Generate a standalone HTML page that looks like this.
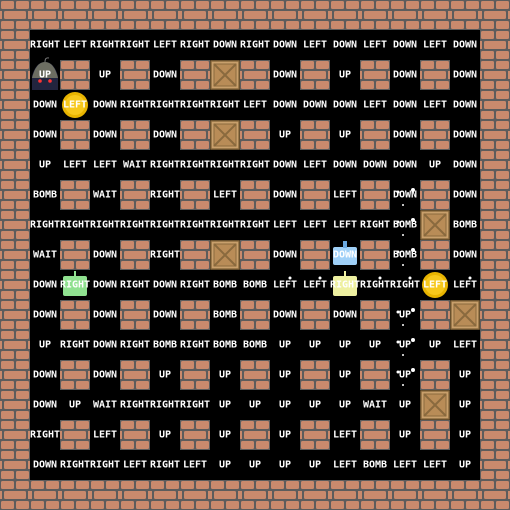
<!DOCTYPE html>
<html><head><meta charset="utf-8"><style>
html,body{margin:0;padding:0;background:#000;}
svg{display:block}
text{font-family:"DejaVu Sans Mono","Liberation Mono",monospace;font-size:10px;font-weight:bold;fill:#fff;text-anchor:middle;dominant-baseline:central}
</style></head><body>
<svg width="510" height="510" viewBox="0 0 510 510" xmlns="http://www.w3.org/2000/svg">
<defs>
<pattern id="b" x="0" y="0" width="30" height="30" patternUnits="userSpaceOnUse">
<rect width="30" height="30" fill="#5c5c5c"/>
<g fill="#c98a6d">
<rect x="1" y="1" width="13" height="8" rx="1.5"/><rect x="16" y="1" width="13" height="8" rx="1.5"/>
<rect x="4" y="11" width="22" height="8" rx="1.5"/><rect x="0" y="11" width="2" height="8"/><rect x="28" y="11" width="2" height="8"/>
<rect x="1" y="21" width="13" height="8" rx="1.5"/><rect x="16" y="21" width="13" height="8" rx="1.5"/>
</g>
</pattern>
<g id="crate">
<rect x="1" y="1" width="28" height="28" fill="#c9a06c" stroke="#8a6a3e" stroke-width="1.5"/>
<rect x="4" y="4" width="22" height="22" fill="#b98c57" stroke="#8a6a3e" stroke-width="1"/>
<path d="M4 4L26 26M26 4L4 26" stroke="#8a6a3e" stroke-width="2"/>
</g>
</defs>
<rect width="510" height="510" fill="url(#b)"/>
<rect x="30" y="30" width="450" height="450" fill="#000"/>
<g fill="url(#b)">
<rect x="60" y="60" width="30" height="30"/><rect x="120" y="60" width="30" height="30"/><rect x="180" y="60" width="30" height="30"/><rect x="240" y="60" width="30" height="30"/><rect x="300" y="60" width="30" height="30"/><rect x="360" y="60" width="30" height="30"/><rect x="420" y="60" width="30" height="30"/>
<rect x="60" y="120" width="30" height="30"/><rect x="120" y="120" width="30" height="30"/><rect x="180" y="120" width="30" height="30"/><rect x="240" y="120" width="30" height="30"/><rect x="300" y="120" width="30" height="30"/><rect x="360" y="120" width="30" height="30"/><rect x="420" y="120" width="30" height="30"/>
<rect x="60" y="180" width="30" height="30"/><rect x="120" y="180" width="30" height="30"/><rect x="180" y="180" width="30" height="30"/><rect x="240" y="180" width="30" height="30"/><rect x="300" y="180" width="30" height="30"/><rect x="360" y="180" width="30" height="30"/><rect x="420" y="180" width="30" height="30"/>
<rect x="60" y="240" width="30" height="30"/><rect x="120" y="240" width="30" height="30"/><rect x="180" y="240" width="30" height="30"/><rect x="240" y="240" width="30" height="30"/><rect x="300" y="240" width="30" height="30"/><rect x="360" y="240" width="30" height="30"/><rect x="420" y="240" width="30" height="30"/>
<rect x="60" y="300" width="30" height="30"/><rect x="120" y="300" width="30" height="30"/><rect x="180" y="300" width="30" height="30"/><rect x="240" y="300" width="30" height="30"/><rect x="300" y="300" width="30" height="30"/><rect x="360" y="300" width="30" height="30"/><rect x="420" y="300" width="30" height="30"/>
<rect x="60" y="360" width="30" height="30"/><rect x="120" y="360" width="30" height="30"/><rect x="180" y="360" width="30" height="30"/><rect x="240" y="360" width="30" height="30"/><rect x="300" y="360" width="30" height="30"/><rect x="360" y="360" width="30" height="30"/><rect x="420" y="360" width="30" height="30"/>
<rect x="60" y="420" width="30" height="30"/><rect x="120" y="420" width="30" height="30"/><rect x="180" y="420" width="30" height="30"/><rect x="240" y="420" width="30" height="30"/><rect x="300" y="420" width="30" height="30"/><rect x="360" y="420" width="30" height="30"/><rect x="420" y="420" width="30" height="30"/>
</g>
<use href="#crate" x="210" y="60"/><use href="#crate" x="210" y="120"/><use href="#crate" x="420" y="210"/><use href="#crate" x="210" y="240"/><use href="#crate" x="450" y="300"/><use href="#crate" x="420" y="390"/>
<!-- sprites -->
<path d="M32 90 L32 76 Q36 62 45 62 Q54 62 58 76 L58 90 Z" fill="#22243e"/>
<path d="M32 78 Q36 62 45 62 Q54 62 58 78 Z" fill="#6d6e62"/>
<path d="M45 62 Q45 57 49 58" stroke="#777" fill="none"/>
<circle cx="40" cy="81" r="1.8" fill="#f33"/><circle cx="50" cy="81" r="1.8" fill="#f33"/>
<circle cx="75" cy="105" r="13" fill="#e8b400"/><circle cx="75" cy="105" r="10" fill="#f7c81c"/>
<circle cx="435" cy="285" r="13" fill="#e8b400"/><circle cx="435" cy="285" r="10" fill="#f7c81c"/>
<rect x="63" y="276" width="24" height="20" rx="2" fill="#8fe08f"/><rect x="74" y="271" width="2" height="6" fill="#8fe08f"/>
<rect x="333" y="276" width="24" height="20" rx="2" fill="#eef0a0"/><rect x="344" y="271" width="2" height="6" fill="#eef0a0"/>
<rect x="333" y="247" width="24" height="18" rx="2" fill="#9fd0f7"/><rect x="343" y="241" width="4" height="7" fill="#6aa8e0"/>
<g fill="#fff">
<circle cx="398" cy="192" r="1.5"/><circle cx="413" cy="190" r="2"/><circle cx="403" cy="205" r="1"/><circle cx="398" cy="222" r="1.5"/><circle cx="413" cy="220" r="2"/><circle cx="403" cy="235" r="1"/><circle cx="398" cy="252" r="1.5"/><circle cx="413" cy="250" r="2"/><circle cx="403" cy="265" r="1"/><circle cx="398" cy="312" r="1.5"/><circle cx="413" cy="310" r="2"/><circle cx="403" cy="325" r="1"/><circle cx="398" cy="342" r="1.5"/><circle cx="413" cy="340" r="2"/><circle cx="403" cy="355" r="1"/><circle cx="398" cy="372" r="1.5"/><circle cx="413" cy="370" r="2"/><circle cx="403" cy="385" r="1"/><circle cx="290" cy="278" r="1.5"/><circle cx="320" cy="278" r="1.5"/><circle cx="380" cy="278" r="1.5"/><circle cx="410" cy="278" r="1.5"/><circle cx="470" cy="278" r="1.5"/>
</g>
<g>
<text x="45" y="45">RIGHT</text><text x="75" y="45">LEFT</text><text x="105" y="45">RIGHT</text><text x="135" y="45">RIGHT</text><text x="165" y="45">LEFT</text><text x="195" y="45">RIGHT</text><text x="225" y="45">DOWN</text><text x="255" y="45">RIGHT</text><text x="285" y="45">DOWN</text><text x="315" y="45">LEFT</text><text x="345" y="45">DOWN</text><text x="375" y="45">LEFT</text><text x="405" y="45">DOWN</text><text x="435" y="45">LEFT</text><text x="465" y="45">DOWN</text>
<text x="45" y="75">UP</text><text x="105" y="75">UP</text><text x="165" y="75">DOWN</text><text x="285" y="75">DOWN</text><text x="345" y="75">UP</text><text x="405" y="75">DOWN</text><text x="465" y="75">DOWN</text>
<text x="45" y="105">DOWN</text><text x="75" y="105">LEFT</text><text x="105" y="105">DOWN</text><text x="135" y="105">RIGHT</text><text x="165" y="105">RIGHT</text><text x="195" y="105">RIGHT</text><text x="225" y="105">RIGHT</text><text x="255" y="105">LEFT</text><text x="285" y="105">DOWN</text><text x="315" y="105">DOWN</text><text x="345" y="105">DOWN</text><text x="375" y="105">LEFT</text><text x="405" y="105">DOWN</text><text x="435" y="105">LEFT</text><text x="465" y="105">DOWN</text>
<text x="45" y="135">DOWN</text><text x="105" y="135">DOWN</text><text x="165" y="135">DOWN</text><text x="285" y="135">UP</text><text x="345" y="135">UP</text><text x="405" y="135">DOWN</text><text x="465" y="135">DOWN</text>
<text x="45" y="165">UP</text><text x="75" y="165">LEFT</text><text x="105" y="165">LEFT</text><text x="135" y="165">WAIT</text><text x="165" y="165">RIGHT</text><text x="195" y="165">RIGHT</text><text x="225" y="165">RIGHT</text><text x="255" y="165">RIGHT</text><text x="285" y="165">DOWN</text><text x="315" y="165">LEFT</text><text x="345" y="165">DOWN</text><text x="375" y="165">DOWN</text><text x="405" y="165">DOWN</text><text x="435" y="165">UP</text><text x="465" y="165">DOWN</text>
<text x="45" y="195">BOMB</text><text x="105" y="195">WAIT</text><text x="165" y="195">RIGHT</text><text x="225" y="195">LEFT</text><text x="285" y="195">DOWN</text><text x="345" y="195">LEFT</text><text x="405" y="195">DOWN</text><text x="465" y="195">DOWN</text>
<text x="45" y="225">RIGHT</text><text x="75" y="225">RIGHT</text><text x="105" y="225">RIGHT</text><text x="135" y="225">RIGHT</text><text x="165" y="225">RIGHT</text><text x="195" y="225">RIGHT</text><text x="225" y="225">RIGHT</text><text x="255" y="225">RIGHT</text><text x="285" y="225">LEFT</text><text x="315" y="225">LEFT</text><text x="345" y="225">LEFT</text><text x="375" y="225">RIGHT</text><text x="405" y="225">BOMB</text><text x="465" y="225">BOMB</text>
<text x="45" y="255">WAIT</text><text x="105" y="255">DOWN</text><text x="165" y="255">RIGHT</text><text x="285" y="255">DOWN</text><text x="345" y="255">DOWN</text><text x="405" y="255">BOMB</text><text x="465" y="255">DOWN</text>
<text x="45" y="285">DOWN</text><text x="75" y="285">RIGHT</text><text x="105" y="285">DOWN</text><text x="135" y="285">RIGHT</text><text x="165" y="285">DOWN</text><text x="195" y="285">RIGHT</text><text x="225" y="285">BOMB</text><text x="255" y="285">BOMB</text><text x="285" y="285">LEFT</text><text x="315" y="285">LEFT</text><text x="345" y="285">RIGHT</text><text x="375" y="285">RIGHT</text><text x="405" y="285">RIGHT</text><text x="435" y="285">LEFT</text><text x="465" y="285">LEFT</text>
<text x="45" y="315">DOWN</text><text x="105" y="315">DOWN</text><text x="165" y="315">DOWN</text><text x="225" y="315">BOMB</text><text x="285" y="315">DOWN</text><text x="345" y="315">DOWN</text><text x="405" y="315">UP</text>
<text x="45" y="345">UP</text><text x="75" y="345">RIGHT</text><text x="105" y="345">DOWN</text><text x="135" y="345">RIGHT</text><text x="165" y="345">BOMB</text><text x="195" y="345">RIGHT</text><text x="225" y="345">BOMB</text><text x="255" y="345">BOMB</text><text x="285" y="345">UP</text><text x="315" y="345">UP</text><text x="345" y="345">UP</text><text x="375" y="345">UP</text><text x="405" y="345">UP</text><text x="435" y="345">UP</text><text x="465" y="345">LEFT</text>
<text x="45" y="375">DOWN</text><text x="105" y="375">DOWN</text><text x="165" y="375">UP</text><text x="225" y="375">UP</text><text x="285" y="375">UP</text><text x="345" y="375">UP</text><text x="405" y="375">UP</text><text x="465" y="375">UP</text>
<text x="45" y="405">DOWN</text><text x="75" y="405">UP</text><text x="105" y="405">WAIT</text><text x="135" y="405">RIGHT</text><text x="165" y="405">RIGHT</text><text x="195" y="405">RIGHT</text><text x="225" y="405">UP</text><text x="255" y="405">UP</text><text x="285" y="405">UP</text><text x="315" y="405">UP</text><text x="345" y="405">UP</text><text x="375" y="405">WAIT</text><text x="405" y="405">UP</text><text x="465" y="405">UP</text>
<text x="45" y="435">RIGHT</text><text x="105" y="435">LEFT</text><text x="165" y="435">UP</text><text x="225" y="435">UP</text><text x="285" y="435">UP</text><text x="345" y="435">LEFT</text><text x="405" y="435">UP</text><text x="465" y="435">UP</text>
<text x="45" y="465">DOWN</text><text x="75" y="465">RIGHT</text><text x="105" y="465">RIGHT</text><text x="135" y="465">LEFT</text><text x="165" y="465">RIGHT</text><text x="195" y="465">LEFT</text><text x="225" y="465">UP</text><text x="255" y="465">UP</text><text x="285" y="465">UP</text><text x="315" y="465">UP</text><text x="345" y="465">LEFT</text><text x="375" y="465">BOMB</text><text x="405" y="465">LEFT</text><text x="435" y="465">LEFT</text><text x="465" y="465">UP</text>
</g>
</svg>
</body></html>
